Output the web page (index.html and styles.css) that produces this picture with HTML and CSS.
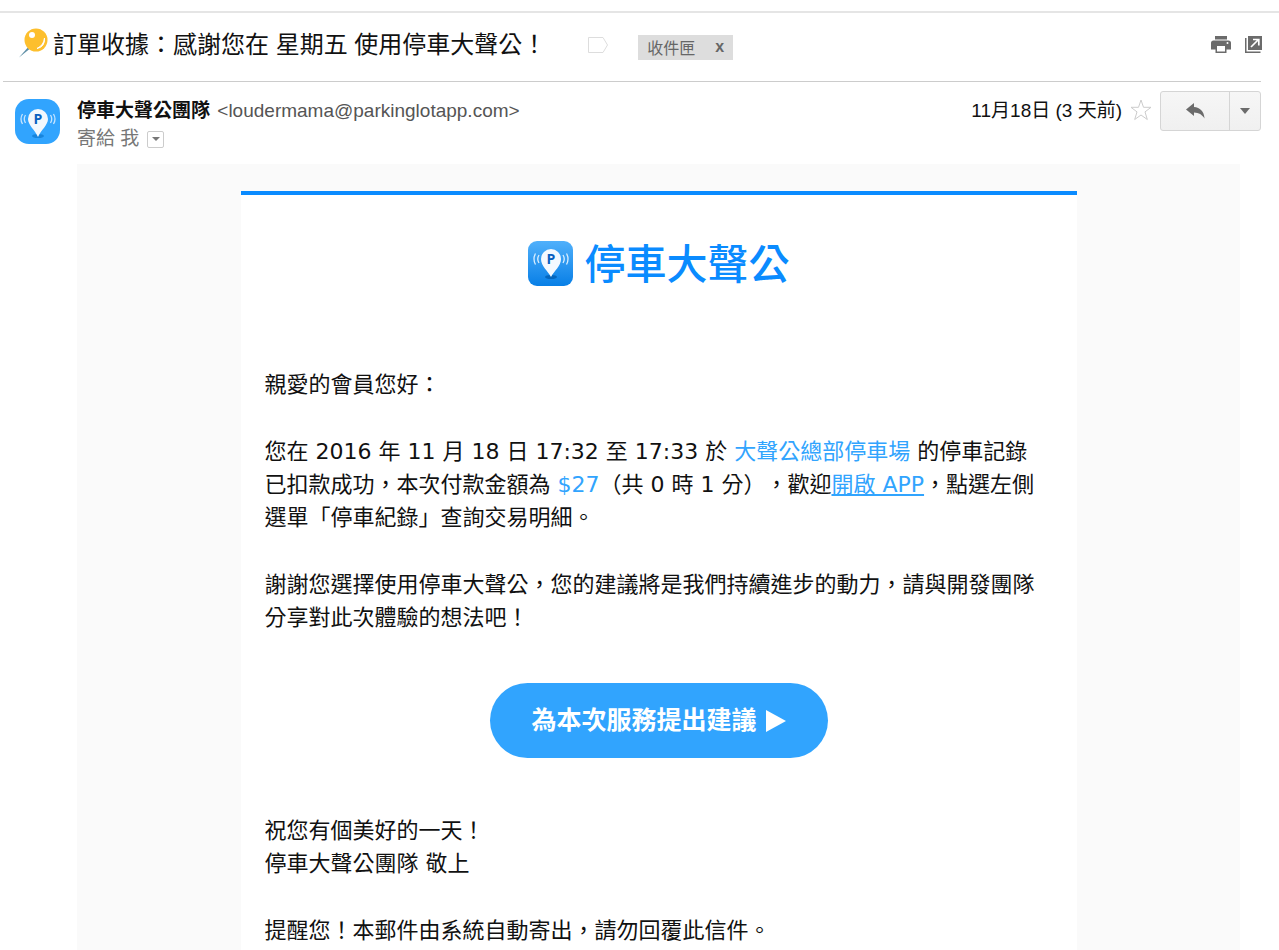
FILE: index.html
```html
<!DOCTYPE html>
<html lang="zh-Hant">
<head>
  <meta charset="UTF-8" />
  <meta name="viewport" content="width=device-width, initial-scale=1.0" />
  <title>訂單收據</title>
  <link rel="stylesheet" href="styles.css">
</head>
<body>
  <div class="mail">
    <header class="subject-bar">
      <svg class="pin" viewBox="0 0 30 30" aria-hidden="true">
        <path d="M0 29.500 L11 17 L13 19 Z" fill="#5f8fa6" />
        <circle cx="17" cy="12" r="11.500" fill="#fdbf2d" />
        <path d="M25.500 10 Q 25 17 18 20.500 Q 26 19 25.500 10 Z" fill="#fff" stroke="#fff" />
        <circle cx="13" cy="7" r="3" fill="#fff" />
      </svg>
      <h1>訂單收據：感謝您在 星期五 使用停車大聲公！</h1>
      <svg class="tag" viewBox="0 0 20 16" aria-hidden="true">
        <path d="M.500 .500 H15 L19.500 8 L15 15.500 H.500 Z" fill="#fff" stroke="#ddd" />
      </svg>
      <span class="label">收件匣 <button type="button" aria-label="移除標籤">x</button></span>
      <div class="tools">
        <button type="button" aria-label="列印">
          <svg width="20" height="18" viewBox="0 0 20 18">
            <path fill="#6b6b6b" fill-rule="evenodd" d="M4 0 H16 V3.500 H4 Z M2.500 4.500 H17.500 Q20 4.500 20 7 V13.500 H15.500 V17 H4.500 V13.500 H0 V7 Q0 4.500 2.500 4.500 Z M6 10 V15.500 H14 V10 Z" />
            <circle cx="16.500" cy="7" r="1" fill="#fff" />
          </svg>
        </button>
        <button type="button" aria-label="在新視窗中開啟">
          <svg width="18" height="18" viewBox="0 0 18 18">
            <path fill="#6b6b6b" d="M3 0 H17 V14 H3 Z M0 2 H1.500 V15.500 H15.500 V17 H0 Z" />
            <path fill="none" stroke="#fff" stroke-width="1.700" d="M6 11 L13.500 3.500 M8 3.500 H13.800 V9.500" />
          </svg>
        </button>
      </div>
    </header>

    <section class="sender">
      <svg class="avatar" viewBox="0 0 45 45" aria-hidden="true">
        <rect width="45" height="45" rx="14" fill="#31a4fe" />
        <ellipse cx="23" cy="37" rx="6" ry="2" fill="#1784dc" />
        <path d="M23 38 C20 31 13 26 13 20 A10 10 0 0 1 33 20 C33 26 26 31 23 38 Z" fill="#f2f7fd" />
        <path d="M10.500 16 Q8 20 10.500 24 M7.500 15 Q4.500 20 7.500 25 M35.500 16 Q38 20 35.500 24 M38.500 15 Q41.500 20 38.500 25" fill="none" stroke="#c5e4ff" stroke-width="1.300" />
        <text x="23" y="25" text-anchor="middle">P</text>
      </svg>
      <div class="from">
        <div><strong>停車大聲公團隊</strong> <span class="address">&lt;loudermama@parkinglotapp.com&gt;</span></div>
        <div class="to">寄給 我
          <button type="button" class="details" aria-label="顯示詳細資料"><svg width="8" height="4" viewBox="0 0 8 4"><path d="M0 0 H8 L4 4 Z" fill="#777" /></svg></button>
        </div>
      </div>
      <span class="date">11月18日 (3 天前)</span>
      <button type="button" class="star" aria-label="星號">
        <svg width="22" height="22" viewBox="0 0 22 22"><path d="M11 1 L13.500 8.300 H21 L15 12.900 L17.300 20.500 L11 16 L4.700 20.500 L7 12.900 L1 8.300 H8.500 Z" fill="#fff" stroke="#ccc" /></svg>
      </button>
      <div class="actions">
        <button type="button" class="reply" aria-label="回覆">
          <svg width="19" height="16" viewBox="0 0 19 16"><path d="M0 6.500 L8 0 V4 C14 4.500 18 8 18.500 15.500 C16 11.500 13 9.800 8 9.500 V13 Z" fill="#6b6b6b" /></svg>
        </button>
        <button type="button" class="more" aria-label="更多">
          <svg width="10" height="6" viewBox="0 0 10 6"><path d="M0 0 H10 L5 6 Z" fill="#6b6b6b" /></svg>
        </button>
      </div>
    </section>

    <main class="content">
      <article class="card">
        <div class="brand">
          <svg class="brand-icon" viewBox="0 0 45 45" aria-hidden="true">
            <defs>
              <linearGradient id="sky" x1="0" y1="0" x2="0" y2="1">
                <stop offset="0" stop-color="#50b0fb" />
                <stop offset="1" stop-color="#087fe6" />
              </linearGradient>
            </defs>
            <rect width="45" height="45" rx="9" fill="url(#sky)" />
            <ellipse cx="23" cy="36" rx="6" ry="2" fill="#0566bd" />
            <path d="M23 36 C20 30 13 25 13 18 A10 10 0 0 1 33 18 C33 25 26 30 23 36 Z" fill="#f4f9ff" />
            <path d="M11 14 Q8.500 18 11 22 M7.500 12.500 Q4.500 18 7.500 23.500 M35 14 Q37.500 18 35 22 M38.500 12.500 Q41.500 18 38.500 23.500" fill="none" stroke="#d9eeff" stroke-width="1.300" />
            <text x="23" y="23" text-anchor="middle">P</text>
          </svg>
          <span>停車大聲公</span>
        </div>

        <p>親愛的會員您好：</p>
        <p>您在 2016 年 11 月 18 日 17:32 至 17:33 於 <span class="accent">大聲公總部停車場</span> 的停車記錄<br>
          已扣款成功，本次付款金額為 <span class="accent">$27</span>（共 0 時 1 分），歡迎<a href="#app">開啟 APP</a>，點選左側<br>
          選單「停車紀錄」查詢交易明細。</p>
        <p>謝謝您選擇使用停車大聲公，您的建議將是我們持續進步的動力，請與開發團隊<br>
          分享對此次體驗的想法吧！</p>

        <a class="feedback" href="#feedback">為本次服務提出建議
          <svg width="20" height="22" viewBox="0 0 20 22" aria-hidden="true"><path d="M0 0 L20 11 L0 22 Z" fill="#fff" /></svg>
        </a>

        <p>祝您有個美好的一天！<br>
          停車大聲公團隊 敬上</p>
        <p class="notice">提醒您！本郵件由系統自動寄出，請勿回覆此信件。</p>
      </article>
    </main>
  </div>
</body>
</html>
```
FILE: styles.css
```css
body {
  margin: 0;
  font-family: "Liberation Sans", "Noto Sans CJK TC", sans-serif;
  background: #fff;
  color: #111;
  text-spacing-trim: space-all;
}
button {
  padding: 0;
  border: none;
  background: none;
  font: inherit;
  color: inherit;
  cursor: pointer;
}
svg {
  display: block;
  flex: none;
}
.mail {
  display: flow-root;
  margin-top: 11px;
  border-top: 2px solid #e5e5e5;
  padding: 0 18px 0 3px;
}
.subject-bar {
  display: flex;
  align-items: center;
  height: 68px;
  padding-left: 16px;
  border-bottom: 1px solid #ccc;
}
.subject-bar .pin {
  width: 30px;
  height: 30px;
  margin: 0 4px 8px 0;
}
h1 {
  margin: 0 42px 4px 0;
  font-size: 24px;
  line-height: 36px;
  font-weight: 400;
  white-space: nowrap;
}
.tag {
  width: 20px;
  height: 16px;
  margin: 0 30px 4px 0;
}
.label {
  display: flex;
  align-items: center;
  gap: 20px;
  height: 25px;
  padding: 0 9px;
  background: #ddd;
  color: #666;
  font-size: 16px;
}
.label button {
  font-weight: 700;
}
.tools {
  display: flex;
  gap: 14px;
  margin: 0 -2px 4px auto;
}
.sender {
  display: flex;
  align-items: flex-start;
  padding: 9px 0 0 12px;
  font-size: 19px;
  line-height: 28px;
}
.avatar {
  width: 45px;
  height: 45px;
  margin: 8px 17px 0 0;
}
.avatar text,
.brand-icon text {
  font: 700 14px "Open Sans", sans-serif;
  fill: #0a5fc0;
}
.from {
  flex: 1;
  padding-top: 6px;
}
.address {
  margin-left: 2px;
  color: #555;
}
.to {
  display: flex;
  align-items: center;
  gap: 8px;
  color: #777;
}
.details {
  display: flex;
  align-items: center;
  justify-content: center;
  width: 17px;
  height: 17px;
  border: 1px solid #ccc;
  border-radius: 2px;
}
.date {
  padding-top: 6px;
}
.star {
  margin: 8px 8px 0;
}
.actions {
  display: flex;
  box-sizing: border-box;
  height: 40px;
  border: 1px solid #d5d5d5;
  border-radius: 3px;
  background: linear-gradient(#f6f6f6, #f0f0f0);
}
.actions button {
  display: flex;
  align-items: center;
  justify-content: center;
  width: 30px;
}
.actions .reply {
  width: 69px;
  border-right: 1px solid #d5d5d5;
}
.content {
  margin: 11px 21px 0 74px;
  padding-top: 27px;
  background: #fafafa;
}
.card {
  box-sizing: border-box;
  max-width: 836px;
  margin: 0 auto;
  padding: 40px 24px 3px;
  border-top: 4px solid #0a8bff;
  background: #fff;
  font-family: "DejaVu Sans", "Noto Sans CJK TC", sans-serif;
  font-size: 22px;
  line-height: 33px;
}
.brand {
  display: flex;
  align-items: center;
  justify-content: center;
  gap: 12px;
  margin-bottom: 73px;
  color: #0a8bff;
  font-size: 41px;
  font-weight: 500;
  line-height: 60px;
}
.brand-icon {
  width: 45px;
  height: 45px;
  margin-bottom: 4px;
}
.card p {
  margin: 0 0 34px;
}
.card .notice {
  margin-bottom: 0;
}
.accent,
.card p a {
  color: #31a4fe;
}
.feedback {
  display: flex;
  align-items: center;
  justify-content: center;
  gap: 9px;
  box-sizing: border-box;
  width: 338px;
  height: 75px;
  margin: 49px auto 56px;
  border-radius: 38px;
  background: #31a4fe;
  color: #fff;
  font-size: 25px;
  font-weight: 700;
  text-decoration: none;
}
```
